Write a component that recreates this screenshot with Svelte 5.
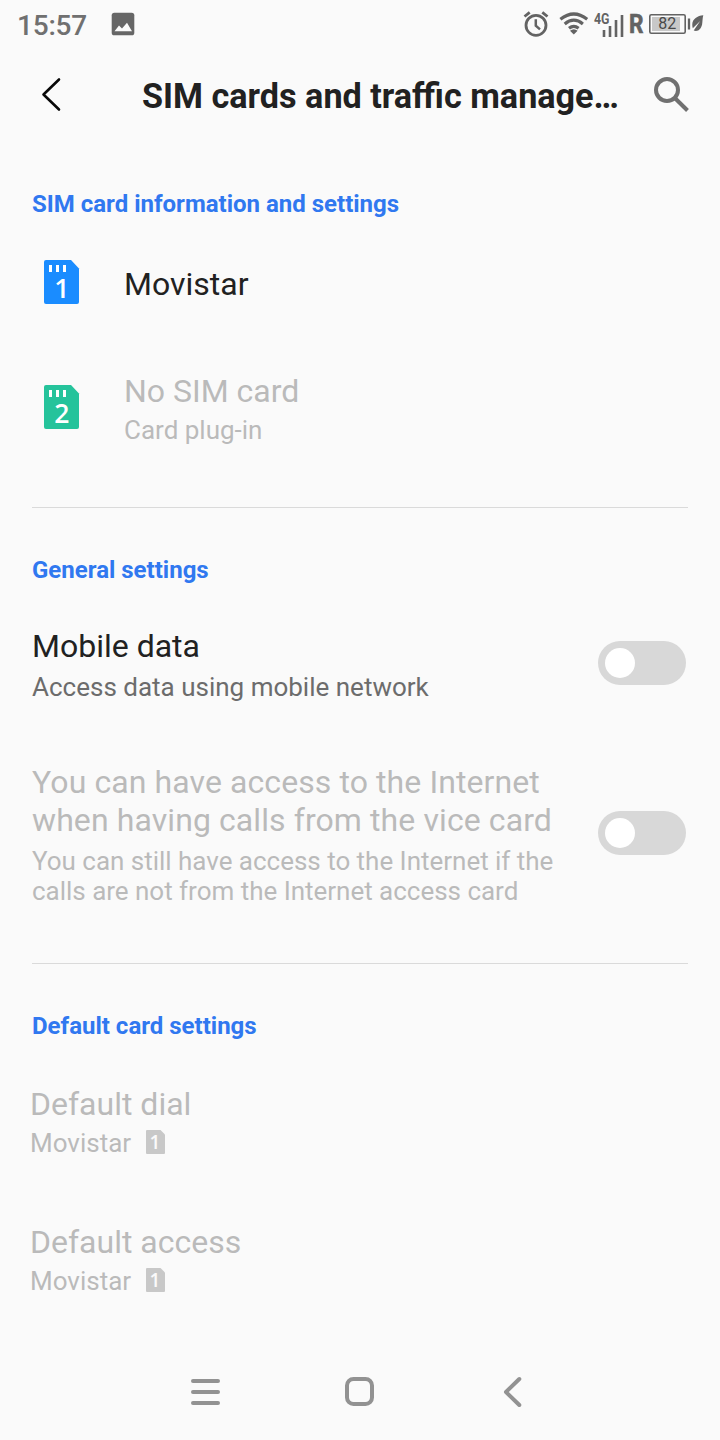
<script>
  const sims = [
    { slot: 1, name: 'Movistar', note: '', tone: 'blue' },
    { slot: 2, name: 'No SIM card', note: 'Card plug-in', tone: 'green' }
  ];
  const defaults = [
    { name: 'Default dial', value: 'Movistar' },
    { name: 'Default access', value: 'Movistar' }
  ];
</script>

<div class="screen">
  <div class="status">
    <span class="time">15:57</span>
    <svg class="photo" width="24" height="24" viewBox="0 0 24 24">
      <rect x="0.7" y="0.7" width="22.6" height="22.6" rx="2.6" fill="#666" />
      <path d="M3.5 19.2 8 13.5l3 3 5-5.7 5 8.4z" fill="#fafafa" />
    </svg>
    <svg class="indicators" width="186" height="36" viewBox="520 6 186 36">
      <g fill="none" stroke="#636363">
        <circle cx="536" cy="25.3" r="10" stroke-width="2.8" />
        <path d="M535.8 19.2v6.6l4.2 3.6" stroke-width="2.5" />
        <path d="M524.5 16.5l5.200-4.200M547.500 16.500l-5.200-4.200" stroke-width="2.800" />
        <path d="M560.400 19.200q13.400-10.400 26.800 0M564.700 23.900q9.100-7.400 18.200 0M569 28.200q4.800-3.800 9.600 0" stroke-width="3.200" />
        <path d="M604 30v7M610 26v11M616 20v17M622 15v22" stroke-width="2.600" />
        <rect x="649.800" y="14.800" width="35.400" height="18.400" rx="1.500" stroke-width="1.600" />
        <path d="M689 18.500v11" stroke-width="2.300" />
      </g>
      <path d="M570 30.700q3.800-3 7.600 0L573.800 34.500z" fill="#636363" />
      <rect x="652" y="17" width="28" height="14" fill="#c8c8c8" />
      <path d="M703.300 15.300c-6 .5-10.700 3.700-11 8.800-.1 2.200.3 3.400.5 4.200l7.400-7.400-6.500 9.600c4.200 1.600 7.400-1.400 8.400-6 .5-2.800.3-6.300 1.200-9.200z" fill="#636363" />
      <text x="594" y="23.500" class="net" textLength="15.500" lengthAdjust="spacingAndGlyphs">4G</text>
      <text x="629" y="33" class="roam" textLength="14.500" lengthAdjust="spacingAndGlyphs">R</text>
      <text x="667.300" y="29.300" class="level">82</text>
    </svg>
  </div>

  <header>
    <svg class="back" width="24" height="36" viewBox="40 77 24 36">
      <path d="M59 79.500 43.500 94.500 59 109.500" fill="none" stroke="#080808" stroke-width="2.600" stroke-linecap="round" stroke-linejoin="round" />
    </svg>
    <h1>SIM cards and traffic manage…</h1>
    <svg class="search" width="40" height="40" viewBox="652 74 40 40">
      <circle cx="667" cy="90" r="11" fill="none" stroke="#707070" stroke-width="4" />
      <path d="M674.800 98 687.500 110.500" stroke="#707070" stroke-width="4" />
    </svg>
  </header>

  <section class="cards">
    <h2>SIM card information and settings</h2>
    {#each sims as sim}
      <div class="sim" class:off={sim.note}>
        <svg class={sim.tone} width="36" height="44" viewBox="0 0 36 44">
          <path class="body" d="M2 0H27L35 8.500V42Q35 44 33 44H2Q0 44 0 42V2Q0 0 2 0z" />
          <path d="M6.500 5v7M13.500 5v7M20.500 5v7" stroke="#fff" stroke-width="3" />
          <text x="17.800" y="38" class="digit">{sim.slot}</text>
        </svg>
        <div>
          <div class="label">{sim.name}</div>
          {#if sim.note}<div class="note">{sim.note}</div>{/if}
        </div>
      </div>
    {/each}
  </section>

  <section class="general">
    <h2>General settings</h2>
    <div class="option">
      <div>
        <div class="label">Mobile data</div>
        <div class="note">Access data using mobile network</div>
      </div>
      <span class="switch"><i></i></span>
    </div>
    <div class="option off">
      <div>
        <div class="label">You can have access to the Internet<br />when having calls from the vice card</div>
        <div class="note">You can still have access to the Internet if the<br />calls are not from the Internet access card</div>
      </div>
      <span class="switch"><i></i></span>
    </div>
  </section>

  <section class="defaults">
    <h2>Default card settings</h2>
    {#each defaults as item}
      <div class="default off">
        <div class="label">{item.name}</div>
        <div class="note">
          <span>{item.value}</span>
          <svg width="19" height="24" viewBox="0 0 19 24">
            <path d="M1 0H14.500L19 4.500V23Q19 24 18 24H1Q0 24 0 23V1Q0 0 1 0z" fill="#c8c8c8" />
            <text x="9" y="19" class="mini">1</text>
          </svg>
        </div>
      </div>
    {/each}
  </section>

  <nav>
    <svg width="30" height="30" viewBox="0 0 30 30"><path d="M3 4H28M3 15H28M3 26H28" /></svg>
    <svg width="30" height="30" viewBox="0 0 30 30"><rect x="3" y="2" width="25" height="25" rx="6.500" /></svg>
    <svg width="30" height="30" viewBox="0 0 30 30"><path d="M21.300 2 8 15 21.300 28" /></svg>
  </nav>
</div>

<style>
  :global(body) { background: #fafafa; }
  .screen {
    width: 720px;
    height: 1440px;
    box-sizing: border-box;
    display: flex;
    flex-direction: column;
    overflow: hidden;
    background: #fafafa;
    color: #212121;
    font-family: Roboto, sans-serif;
  }
  svg { display: block; flex: none; overflow: visible; }
  .status {
    height: 50px;
    flex: none;
    display: flex;
    align-items: flex-start;
    padding: 0 14px 0 17px;
    box-sizing: border-box;
  }
  .time {
    width: 94px;
    margin-top: 9px;
    font: 500 28px/33px Roboto, sans-serif;
    letter-spacing: -0.2px;
    color: #707070;
    white-space: nowrap;
  }
  .photo { margin-top: 12px; }
  .indicators { margin: 6px 0 0 auto; }
  .net { font: 700 15.5px Roboto, sans-serif; fill: #636363; }
  .roam { font: 700 25px Roboto, sans-serif; fill: #636363; stroke: #636363; stroke-width: 0.6px; }
  .level { font: 400 16px Roboto, sans-serif; fill: #484848; text-anchor: middle; }
  header {
    height: 140px;
    flex: none;
    display: flex;
    align-items: flex-start;
    padding: 24px 28px 0 40px;
    box-sizing: border-box;
  }
  .back { margin-top: 3px; }
  h1 {
    margin: 2px 0 0 78px;
    font: 700 34.2px/40px Roboto, sans-serif;
    white-space: nowrap;
  }
  .search { margin-left: auto; }
  h2 {
    margin: 0;
    font: 700 24px/28px Roboto, sans-serif;
    color: #3078f0;
    white-space: nowrap;
  }
  section { flex: none; margin: 0 32px; box-sizing: border-box; }
  .cards { height: 318px; border-bottom: 1px solid #dadada; }
  .general { height: 456px; padding-top: 48px; border-bottom: 1px solid #dadada; }
  .defaults { height: 380px; padding-top: 48px; }
  .label { font-size: 32px; line-height: 38px; white-space: nowrap; }
  .note { font-size: 26px; line-height: 30px; color: #6c6c6c; white-space: nowrap; }
  .off .label, .off .note { color: #bababa; }
  .sim { display: flex; gap: 44px; padding: 42px 0 0 12px; }
  .sim .label { margin-top: 5px; }
  .sim:not(.off) { height: 86px; box-sizing: border-box; }
  .sim.off { padding-top: 69px; }
  .sim.off > svg { margin-top: 12px; }
  .sim.off .label { margin-top: -1px; }
  .sim .note { margin-top: 5px; }
  .blue .body { fill: #1a8cff; }
  .green .body { fill: #25c39b; }
  .digit { font: 600 26.5px "Open Sans", sans-serif; fill: #fff; text-anchor: middle; }
  .option { display: flex; justify-content: space-between; align-items: center; padding-right: 2px; margin-top: 43px; }
  .option.off { margin-top: 61px; }
  .option.off .label { letter-spacing: 0.09px; }
  .option.off .note { letter-spacing: -0.02px; }
  .option .note { margin-top: 7px; }
  .switch { width: 88px; height: 44px; margin-bottom: 4px; border-radius: 22px; background: #d8d8d8; flex: none; }
  .switch i { display: block; width: 30px; height: 30px; margin: 7px; border-radius: 50%; background: #fff; }
  .default { margin: 45px 0 0 -2px; }
  .default + .default { margin-top: 65px; }
  .default .note { display: flex; gap: 15px; margin-top: 5px; }
  .default .note svg { margin-top: 2px; }
  .mini { font: 600 19px "Open Sans", sans-serif; fill: #fafafa; text-anchor: middle; }
  nav {
    height: 96px;
    display: flex;
    align-items: center;
    justify-content: space-between;
    padding: 0 192px 0 190px;
  }
  nav svg { fill: none; stroke: #929292; stroke-width: 4; stroke-linecap: round; stroke-linejoin: round; }
</style>
